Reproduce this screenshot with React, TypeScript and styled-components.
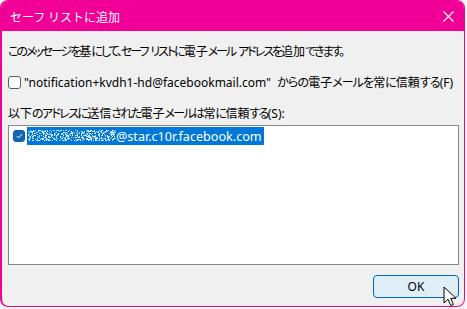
import React from "react";
import styled, { createGlobalStyle } from "styled-components";

const GlobalStyle = createGlobalStyle`
  html, body {
    margin: 0;
    padding: 0;
    background: #f7f7f7;
  }
  body {
    font-family: "Noto Sans", "Noto Sans CJK JP", sans-serif;
  }
`;

const ACCENT = "#f00096";

const Window = styled.div`
  width: 465px;
  height: 307px;
  box-sizing: border-box;
  border: 1px solid ${ACCENT};
  border-left-width: 2px;
  border-radius: 8px;
  overflow: hidden;
  background: #f0f0f0;
  display: flex;
  flex-direction: column;
  position: relative;
`;

const TitleBar = styled.div`
  height: 30px;
  flex-shrink: 0;
  background: ${ACCENT};
  display: flex;
  align-items: center;
  justify-content: space-between;
  padding: 0 8px 0 8px;
  color: #fff;
  font-family: "Noto Sans CJK JP", sans-serif;
  font-size: 12px;
`;

const CloseButton = styled.div`
  width: 14px;
  height: 14px;
  display: flex;
  align-items: center;
  justify-content: center;
  margin-right: 1px;
`;

const Content = styled.div`
  flex: 1;
  display: flex;
  flex-direction: column;
  padding: 13px 5px 8px 6px;
  font-family: "Noto Sans", "Noto Sans CJK JP", sans-serif;
  font-size: 12px;
  font-feature-settings: "palt";
  color: #000;
`;

const Line = styled.div<{ $mt?: number }>`
  height: 16px;
  line-height: 16px;
  margin-top: ${({ $mt }) => $mt ?? 0}px;
  white-space: nowrap;
`;

// kana in the dialog font are narrower than in Noto CJK
const KanaRun = styled.span<{ $ls: number }>`
  letter-spacing: ${({ $ls }) => $ls}px;
`;

const KANA = /^[\u3000-\u303f\u3040-\u30ff]+$/;

function Jp({ text, ls = -1.9 }: { text: string; ls?: number }) {
  const parts = text.split(/([\u3000-\u303f\u3040-\u30ff]+)/);
  return (
    <>
      {parts.map((p, i) =>
        KANA.test(p) ? (
          <KanaRun key={i} $ls={ls}>
            {p}
          </KanaRun>
        ) : (
          p
        )
      )}
    </>
  );
}

const CheckRow = styled.label`
  display: flex;
  align-items: center;
  gap: 3px;
  height: 16px;
  margin-top: 14px;
  white-space: nowrap;
`;

const Box = styled.span<{ $checked?: boolean; $size: number }>`
  width: ${({ $size }) => $size}px;
  height: ${({ $size }) => $size}px;
  box-sizing: border-box;
  border-radius: 3px;
  border: 1px solid ${({ $checked }) => ($checked ? "#0a5fb4" : "#5c5c5c")};
  background: ${({ $checked }) => ($checked ? "#1464b4" : "#fff")};
  display: inline-flex;
  align-items: center;
  justify-content: center;
  flex-shrink: 0;
`;

const ListBox = styled.div`
  margin-top: 3px;
  height: 140px;
  width: 451px;
  box-sizing: border-box;
  border: 1px solid #828790;
  background: #fff;
  padding: 1px 4px;
`;

const ListItem = styled.div`
  display: flex;
  align-items: center;
  height: 18px;
  gap: 2px;
`;

const Selected = styled.span`
  display: inline-flex;
  align-items: center;
  height: 18px;
  background: #0078d7;
  color: #fff;
  padding: 0 2px 0 1px;
  white-space: nowrap;
  font-size: 12.6px;
`;

const Footer = styled.div`
  display: flex;
  justify-content: flex-end;
  margin-top: auto;
`;

const OkButton = styled.button`
  width: 86px;
  height: 23px;
  box-sizing: border-box;
  border: 1px solid #0067c0;
  border-radius: 4px;
  background: #e0eef9;
  font-family: "Noto Sans", sans-serif;
  font-size: 12px;
  color: #000;
  padding: 0;
`;

const Cursor = styled.svg`
  position: absolute;
  left: 441px;
  top: 285px;
`;

function Noise() {
  const rects: React.ReactNode[] = [];
  let seed = 7;
  const rnd = () => {
    seed = (seed * 9301 + 49297) % 233280;
    return seed / 233280;
  };
  for (let y = 3; y < 14; y++) {
    for (let x = 0; x < 88; x++) {
      if (rnd() < 0.42) {
        rects.push(
          <rect key={`${x}-${y}`} x={x} y={y} width={1} height={1} fill="#fff" opacity={0.6 + rnd() * 0.4} />
        );
      }
    }
  }
  return (
    <svg width="88" height="18" viewBox="0 0 88 18">
      {rects}
    </svg>
  );
}

export default function App() {
  return (
    <>
      <GlobalStyle />
      <Window>
        <TitleBar>
          <span>セーフ リストに追加</span>
          <CloseButton>
            <svg width="11" height="11" viewBox="0 0 11 11">
              <path d="M0.5 0.5 L10.5 10.5 M10.5 0.5 L0.5 10.5" stroke="#fff" strokeWidth="1.1" />
            </svg>
          </CloseButton>
        </TitleBar>
        <Content>
          <Line>
            <Jp text="このメッセージを基にして、セーフ リストに電子メール アドレスを追加できます。" ls={-2.05} />
          </Line>
          <CheckRow>
            <Box $size={13} />
            <span>
              "notification+kvdh1-hd@facebookmail.com"&nbsp;&nbsp;<Jp text="からの電子メールを常に信頼する" ls={-0.9} />(F)
            </span>
          </CheckRow>
          <Line $mt={16}>
            <Jp text="以下のアドレスに送信された電子メールは常に信頼する" ls={-1.65} />(S):
          </Line>
          <ListBox>
            <ListItem>
              <Box $checked $size={12}>
                <svg width="7" height="6" viewBox="0 0 7 6">
                  <path d="M0.8 3 L2.6 4.8 L6.2 1" stroke="#fff" strokeWidth="1" fill="none" />
                </svg>
              </Box>
              <Selected>
                <Noise />
                <span>@star.c10r.facebook.com</span>
              </Selected>
            </ListItem>
          </ListBox>
          <Footer>
            <OkButton>OK</OkButton>
          </Footer>
        </Content>
        <Cursor width="16" height="22" viewBox="0 0 16 22">
          <path d="M1 1 L1 17 L5 13.2 L7.8 19.6 L10.4 18.5 L7.7 12.3 L13 12.3 Z" fill="#fff" stroke="#000" strokeWidth="1" strokeLinejoin="round" />
        </Cursor>
      </Window>
    </>
  );
}
